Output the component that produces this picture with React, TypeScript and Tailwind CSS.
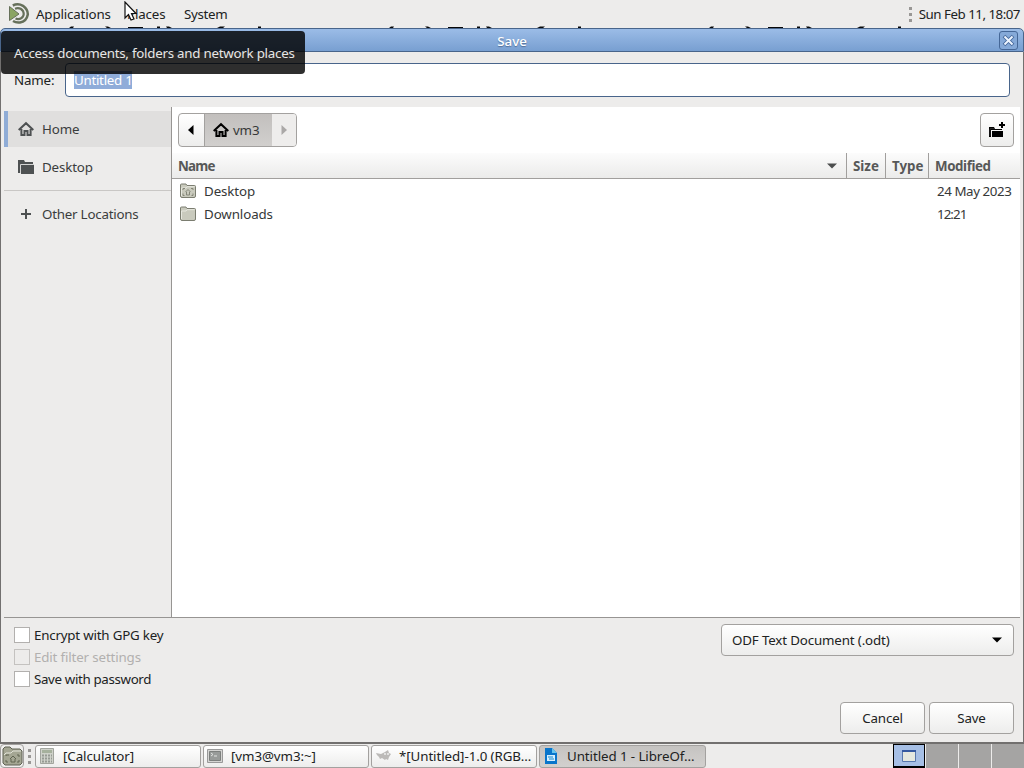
import React from "react";

const button = "border border-[#a3a19f] rounded-[4px] bg-linear-to-b from-white to-[#ededec]";

function HomeIcon({ color }: { color: string }) {
  return (
    <svg width="16" height="16" viewBox="0 0 16 16" fill="none" stroke={color} strokeWidth="2" className="shrink-0">
      <path d="M0.7 9 8 2.2 15.3 9M3.4 8v6H6.5V10h3v4h3.1V8" />
    </svg>
  );
}

function FolderIcon({ home }: { home?: boolean }) {
  return (
    <svg width="16" height="16" viewBox="0 0 16 16" className="shrink-0">
      <path d="M.5 13V2Q.5 1 1.5 1H6l1 1.5h7.5Q15.500 2.500 15.500 3.500V13Q15.500 14.500 14 14.500H2Q.5 14.500 .5 13Z" fill="#c9cabd" stroke="#7b7d70" />
      <path d="M1.500 13V5H6l1-1.300h7.500" fill="none" stroke="#e7e8df" />
      {home && <path d="M5.500 9 8 6.500l2.500 2.500M6.500 9v3h3V9M3 7V5.500h2M11 5.500h2V7M3 10.500v2h1.500M13 10.500v2h-1.500" fill="none" stroke="#858779" />}
    </svg>
  );
}

function Grip() {
  return (
    <div className="flex w-[3px] shrink-0 flex-col gap-[3px]">
      <i className="h-[3px] bg-[#999795]" />
      <i className="h-[3px] bg-[#999795]" />
      <i className="h-[3px] bg-[#999795]" />
    </div>
  );
}

function DocumentText() {
  return (
    <svg width="1024" height="2" viewBox="0 0 1024 2" className="absolute left-0 top-[26px]">
      {[0, 320, 640].map((x) => (
        <g key={x} transform={`translate(${x} 0)`} fill="#080808">
          <path d="M69 2l2-1.500h3l-1 1.500zM105 .5h3l3 1.500h-4zM128 1h15v1h-15zM157 .5h3v1.500h-3zM166 .5h3l3 1.500h-5zM217 2l3-1.500h5l-2 1.500zM258 .5h3v1.500h-3z" />
        </g>
      ))}
    </svg>
  );
}

function MenuBar() {
  return (
    <header className="relative flex h-7 shrink-0 items-center bg-[#edeceb]">
      <DocumentText />
      <svg width="22" height="22" viewBox="0 0 22 22" className="ml-2 mt-[-2px] shrink-0" fill="none">
        <path d="M4.800 3.500Q10 1 15 3.800Q20 7.500 19.800 12.500Q18.500 19.500 12 20.500Q8 21 5 19" stroke="#66705a" strokeWidth="2.500" />
        <path d="M7 6.700Q12 5 15 9Q17 13.500 13.500 16Q10.500 17.800 7.500 16.500" stroke="#66705a" strokeWidth="2.200" />
        <path d="M1.500 4.500 11 12 1.500 18.500Z" fill="#8ba563" stroke="#66705a" />
      </svg>
      <span className="ml-[6px] w-[75px]">Applications</span>
      <span className="ml-4 w-[41px]">Places</span>
      <span className="ml-4 tracking-[-0.3px]">System</span>
      <div className="ml-auto mr-[4px] flex items-center gap-[7px]">
        <Grip />
        <span className="-mt-px tracking-[-0.5px]">Sun Feb 11, 18:07</span>
      </div>
    </header>
  );
}

function TitleBar() {
  return (
    <div className="relative flex h-6 shrink-0 items-center rounded-t-[5px] border border-[#49658b] bg-linear-to-b from-[#9bbce7] to-[#789fd1] text-white">
      <span className="w-full pt-[2px] text-center font-medium tracking-normal [text-shadow:0_1px_1px_#526f99]">Save</span>
      <div className="absolute right-[5px] top-[2px] flex h-[19px] w-[19px] items-center justify-center rounded-[3px] border border-[#456797] bg-[#85a9d8]">
        <svg width="13" height="13" viewBox="0 0 13 13" stroke="#44679a" strokeWidth="3.800">
          <path d="m2 2 9 9M11 2l-9 9" />
          <path d="m2.500 2.500 8 8M10.500 2.500l-8 8" stroke="#edf5ff" strokeWidth="2" />
        </svg>
      </div>
    </div>
  );
}

function Sidebar() {
  return (
    <aside className="w-[168px] shrink-0 border-r border-[#979593] text-[#3b3d3d]">
      <div className="mt-1 flex h-[36px] items-center gap-2 border-l-4 border-[#8facd6] bg-[#e0dfde] pl-[10px]">
        <HomeIcon color="#4e5152" />Home
      </div>
      <div className="mt-[2px] flex h-9 items-center gap-2 pl-[14px]">
        <svg width="16" height="16" viewBox="0 0 16 16" className="shrink-0">
          <path d="M0 1h6l1 2h8v2H3v9H0z" fill="#4e5152" />
          <path d="M3 6h13v9H3z" fill="#4e5152" />
          <path d="M2.500 14V5.500H16" fill="none" stroke="#d5d5d4" />
        </svg>
        Desktop
      </div>
      <div className="mt-[5px] h-px bg-[#c9c7c5]" />
      <div className="mt-[5px] flex h-9 items-center gap-2 pl-[14px] tracking-[-0.22px]">
        <svg width="16" height="16" viewBox="0 0 16 16" stroke="#4e5152" strokeWidth="2"><path d="M3 8h10M8 3v10" /></svg>
        Other Locations
      </div>
    </aside>
  );
}

function Files() {
  return (
    <main className="flex min-w-0 flex-1 flex-col bg-white text-[#363838]">
      <div className="flex h-[46px] shrink-0 items-center justify-between pl-[6px] pr-[6px]">
        <div className={`flex h-[34px] w-[119px] overflow-hidden ${button}`}>
          <div className="flex w-[26px] items-center justify-center border-r border-[#a3a19f] pr-[2px]">
            <svg width="6" height="10" viewBox="0 0 6 10"><path d="M5.500 0v10L0 5z" fill="#000" /></svg>
          </div>
          <div className="flex w-[67px] items-center gap-1 bg-linear-to-b from-[#c2bfbd] to-[#d1cfcd] pl-2">
            <HomeIcon color="#000" />vm3
          </div>
          <div className="flex flex-1 items-center justify-center bg-[#eeedec]">
            <svg width="6" height="10" viewBox="0 0 6 10"><path d="M.5 0v10L6 5z" fill="#aaa8a7" /></svg>
          </div>
        </div>
        <div className={`flex h-[34px] w-[34px] items-center justify-center ${button}`}>
          <svg width="18" height="18" viewBox="0 0 18 18">
            <path d="M1 6h5l1 2h7v1H3v7H1zM4 10h11v6H4zM13 1h2v2h2v2h-2v2h-2V5h-2V3h2z" fill="#000" />
            <path d="M2 7.500h4M2 8v7" stroke="#222" />
          </svg>
        </div>
      </div>
      <div className="flex h-[26px] shrink-0 items-stretch border-b border-[#a19f9d] bg-linear-to-b from-[#fcfcfc] to-[#ebebea] font-bold leading-[26px] tracking-normal text-[#575858]">
        <div className="flex w-[675px] items-center justify-between border-r border-[#a19f9d] pl-[6px] pr-[9px]">
          <span className="tracking-[-0.8px]">Name</span>
          <svg width="10" height="6" viewBox="0 0 10 6"><path d="M0 .5h10L5 5.500z" fill="#4c4e4e" /></svg>
        </div>
        <span className="w-[39px] border-r border-[#a19f9d] pl-[6px]">Size</span>
        <span className="w-[43px] border-r border-[#a19f9d] pl-[6px]">Type</span>
        <span className="pl-[6px] tracking-[-0.4px]">Modified</span>
      </div>
      <div className="flex h-[23px] items-center pl-2">
        <FolderIcon home /><span className="ml-2 flex-1 tracking-[-0.1px]">Desktop</span><span className="w-[83px] whitespace-nowrap tracking-[-0.42px]">24 May 2023</span>
      </div>
      <div className="flex h-[23px] items-center pl-2">
        <FolderIcon /><span className="ml-2 flex-1 tracking-[-0.1px]">Downloads</span><span className="w-[83px] tracking-[-0.95px]">12:21</span>
      </div>
    </main>
  );
}

function Check({ label, disabled, tracking }: { label: string; disabled?: boolean; tracking: string }) {
  return (
    <div className={`flex h-[22px] items-center gap-1 ${tracking} ${disabled ? "text-[#b2b0af]" : ""}`}>
      <span className={`h-4 w-4 border ${disabled ? "border-[#c4c2c0] bg-[#edeceb]" : "border-[#b2b0ae] bg-white"}`} />{label}
    </div>
  );
}

function Task({ children, icon, active }: { children: string; icon: React.ReactNode; active?: boolean }) {
  return (
    <div className={`flex h-[23px] shrink-0 items-center rounded-[3px] border border-[#a3a19f] bg-linear-to-b pl-[3px] ${active ? "w-[167px] from-[#c5c3c1] to-[#d2d0ce]" : "w-[166px] from-white to-[#ededec]"}`}>
      {icon}<span className="ml-2 whitespace-nowrap tracking-[-0.08px]">{children}</span>
    </div>
  );
}

function TaskBar() {
  return (
    <footer className="flex h-6 shrink-0 items-center bg-[#edeceb]">
      <div className="flex h-6 w-6 shrink-0 items-center justify-center rounded-[4px] border border-[#a3a19f] bg-[#f0efee]">
        <svg width="21" height="20" viewBox="0 0 21 20">
          <path d="M1 17V3l2-2h5l2 2h8l2 2v12l-2 2H3z" fill="#a4a693" stroke="#5e6152" />
          <path d="M2 9 4 7h5l2-2h8" fill="none" stroke="#e2e3d8" />
          <path d="M8 13l3-3 3 3M9 13v3h4v-3M4 10V9h3M15 9h2v2M4 14v2h2M17 14v2h-2" fill="none" stroke="#606451" />
        </svg>
      </div>
      <div className="ml-1 mr-1"><Grip /></div>
      <div className="flex gap-[2px]">
        <Task icon={
          <svg width="16" height="16" viewBox="0 0 16 16" className="shrink-0">
            <path d="M1.500.500h13v15h-13z" fill="#cfd2ca" stroke="#a2a59e" />
            <path d="M3 2h10v3H3z" fill="#a6b19d" />
            <path d="M3 7.500h10M3 10.500h10M3 13.500h10" stroke="#969a93" strokeWidth="2" strokeDasharray="2 1" />
          </svg>
        }>[Calculator]</Task>
        <Task icon={
          <svg width="16" height="16" viewBox="0 0 16 16" className="shrink-0">
            <path d="M.500 1.500h15v13H.500z" fill="#d5d5d3" stroke="#999" />
            <path d="M2.500 3.500h11v9h-11z" fill="#989b99" stroke="#7d807e" />
            <path d="m4 5 2 1.500L4 8M7 8h3" fill="none" stroke="#e2e4e2" />
          </svg>
        }>[vm3@vm3:~]</Task>
        <Task icon={
          <svg width="16" height="16" viewBox="0 0 16 16" className="shrink-0">
            <path d="M1 5l5 1 4-2 3-2 1 3 2 1-2 3-1 3-2-1-1 1-3-2-2 1-1-2-2-2z" fill="#bcbab8" />
            <circle cx="10" cy="6" r="1" fill="#eee" /><circle cx="13" cy="6" r="1" fill="#eee" />
          </svg>
        }>*[Untitled]-1.0 (RGB…</Task>
        <Task active icon={
          <svg width="16" height="16" viewBox="0 0 16 16" className="shrink-0">
            <path d="M2 0h7l5 5v11H2z" fill="#0875cb" /><path d="M9 0v5h5z" fill="#67c6ef" />
            <path d="M4 7h8v6H4z" fill="#d6efff" /><path d="M5 9h5M6 11h5" stroke="#168ace" />
          </svg>
        }>Untitled 1 - LibreOf…</Task>
      </div>
      <div className="ml-auto flex h-6 w-[131px] gap-px bg-[#edeceb]">
        <div className="flex w-8 items-center justify-center border border-b-2 border-black bg-[#a6bfe5]">
          <svg width="14" height="12" viewBox="0 0 14 12"><path d="M.500.500h13v11H.500z" fill="#e4e8df" stroke="#5878ad" /><path d="M0 1h14" stroke="#3459a0" strokeWidth="2" /></svg>
        </div>
        <div className="flex-1 bg-[#a5a4a3]" /><div className="flex-1 bg-[#a5a4a3]" /><div className="flex-1 bg-[#a5a4a3]" />
      </div>
    </footer>
  );
}

export default function App() {
  return (
    <div className="relative flex h-[768px] w-[1024px] flex-col overflow-hidden bg-[#edeceb] font-['Noto_Sans',sans-serif] text-[13.333px] leading-[18px] tracking-[-0.15px] text-[#202222]">
      <MenuBar />
      <section className="flex h-[716px] shrink-0 flex-col">
        <TitleBar />
        <div className="flex min-h-0 flex-1 flex-col border-x border-b-2 border-[#72706f]">
          <div className="flex h-[55px] shrink-0 items-center pl-[13px] pr-[13px] pt-[1px]">
            <span className="w-[51px]">Name:</span>
            <div className="flex h-[34px] flex-1 items-center rounded-[4px] border border-[#49658b] bg-white pl-2">
              <span className="bg-[#8facd9] tracking-[-0.28px] text-white">Untitled 1</span>
            </div>
          </div>
          <div className="ml-[3px] mr-[3px] flex h-[511px] shrink-0 border-b border-[#979593]">
            <Sidebar /><Files />
          </div>
          <div className="flex items-start justify-between pl-[13px] pr-[9px] pt-[6px]">
            <div>
              <Check tracking="tracking-[-0.2px]" label="Encrypt with GPG key" />
              <Check tracking="tracking-[-0.15px]" disabled label="Edit filter settings" />
              <Check tracking="tracking-[-0.35px]" label="Save with password" />
            </div>
            <div className={`flex h-8 w-[293px] items-center justify-between pl-[10px] pr-[11px] ${button}`}>
              ODF Text Document (.odt)
              <svg width="10" height="6" viewBox="0 0 10 6"><path d="M0 .5h10L5 5.500z" fill="#000" /></svg>
            </div>
          </div>
          <div className="mt-3 flex justify-end gap-[4px] pr-[9px]">
            <div className={`flex h-8 w-[85px] items-center justify-center ${button}`}>Cancel</div>
            <div className={`flex h-8 w-[85px] items-center justify-center ${button}`}>Save</div>
          </div>
        </div>
      </section>
      <TaskBar />
      <div className="absolute left-px top-[31px] flex h-[43px] w-[304px] items-center whitespace-nowrap rounded-[4px] bg-black/82 pl-[13px] pt-px tracking-[-0.25px] text-[#e6e6e6]">Access documents, folders and network places</div>
      <svg width="14" height="21" viewBox="0 0 14 21" className="absolute left-[124px] top-px">
        <path d="M1 1v16l3.500-3.500L7 19l3-1-2.500-5.500H12z" fill="#fff" stroke="#111" strokeWidth="1.200" />
      </svg>
    </div>
  );
}
